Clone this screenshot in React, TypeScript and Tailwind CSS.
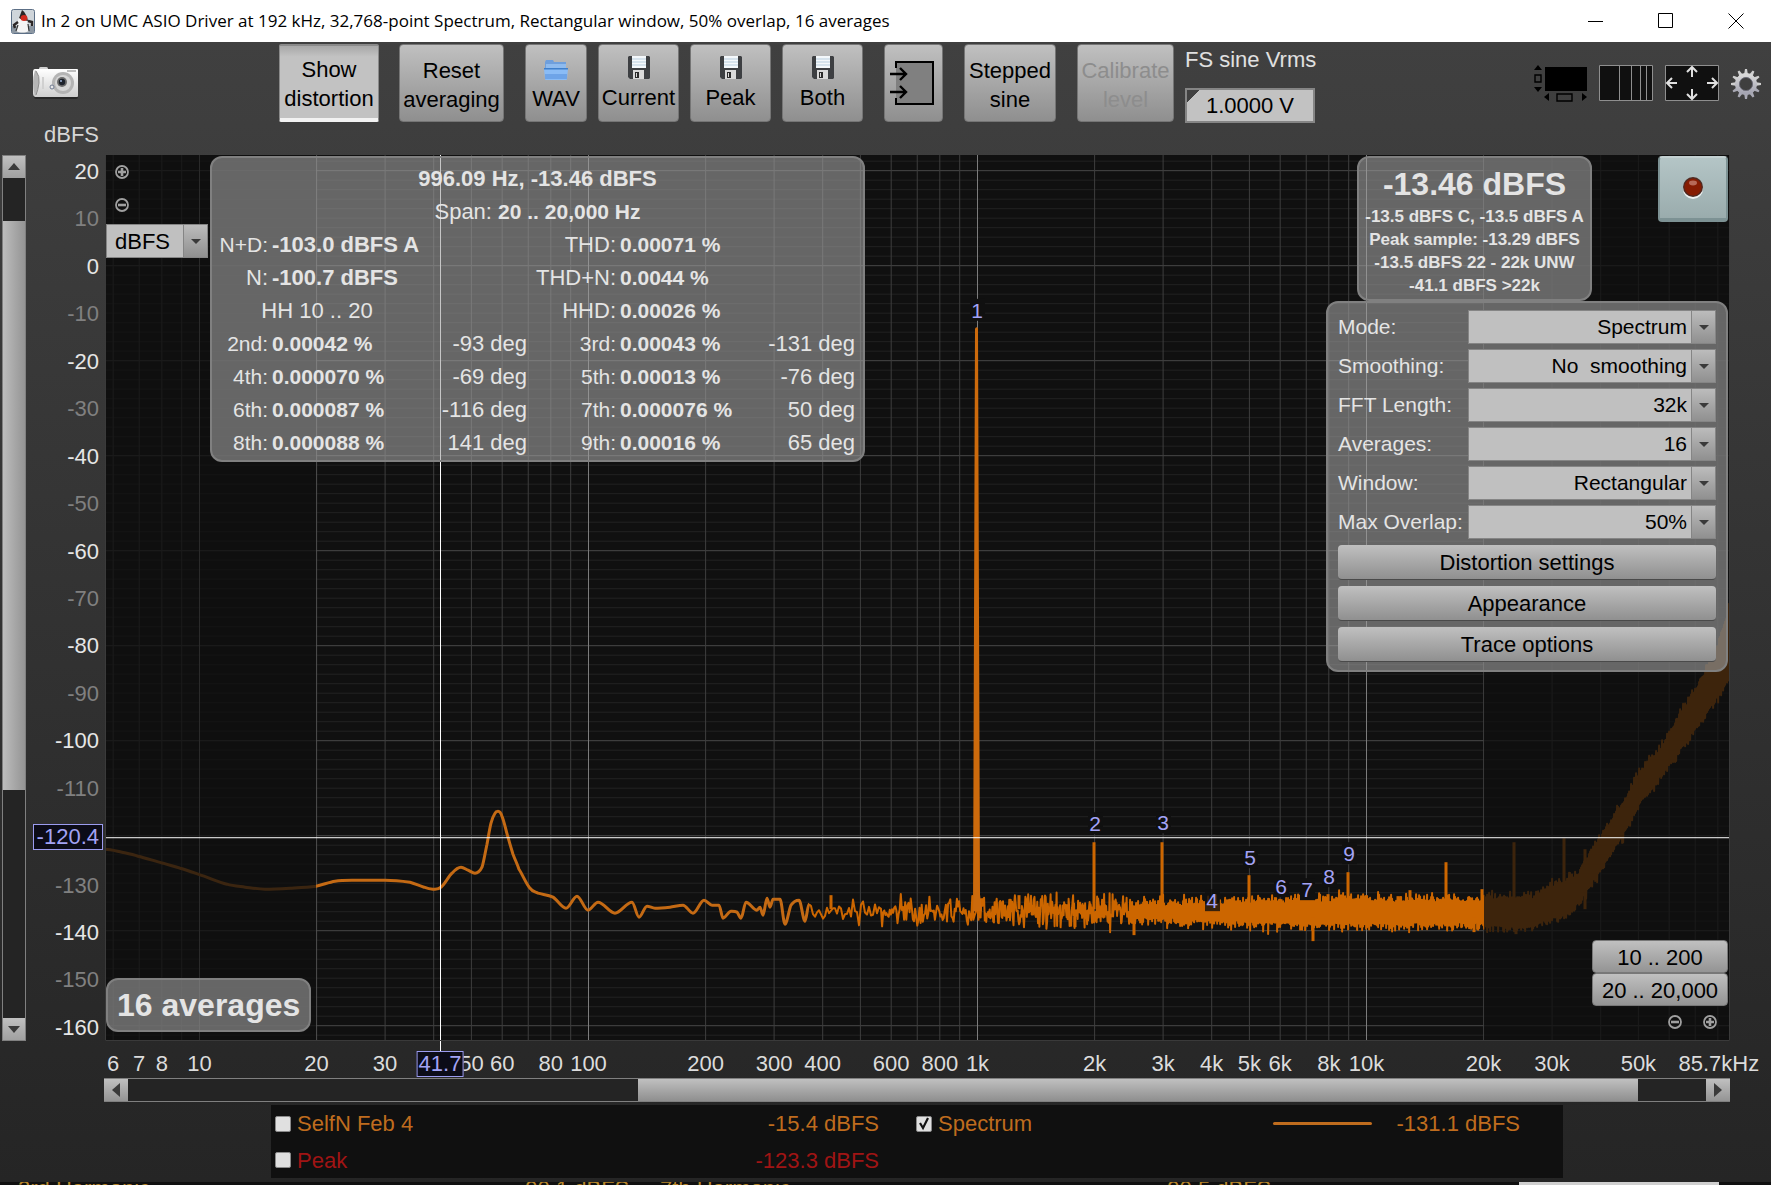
import { ReactNode, useState } from "react";

// plot area in chart units
const LEFT = 105;
const TOP = 155;
const WIDTH = 1625;
const HEIGHT = 887;

const freqToX = (f: number) => 588.5 + 389 * Math.log10(f / 100);
const dbToY = (db: number) => 265.8 - db * 4.7556;
const toPercent = (x: number) => `${((x - LEFT) / WIDTH) * 100}%`;

const freqTicks: [number, string][] = [
  [6, "6"],
  [7, "7"],
  [8, "8"],
  [10, "10"],
  [20, "20"],
  [30, "30"],
  [50, "50"],
  [60, "60"],
  [80, "80"],
  [100, "100"],
  [200, "200"],
  [300, "300"],
  [400, "400"],
  [600, "600"],
  [800, "800"],
  [1000, "1k"],
  [2000, "2k"],
  [3000, "3k"],
  [4000, "4k"],
  [5000, "5k"],
  [6000, "6k"],
  [8000, "8k"],
  [10000, "10k"],
  [20000, "20k"],
  [30000, "30k"],
  [50000, "50k"],
  [80500, "85.7kHz"],
];

const dbTicks = Array.from({ length: 19 }, (_, i) => 20 - i * 10);

const gridFreqs: number[] = [];
for (let decade = 1; decade <= 10000; decade *= 10) {
  for (let n = 1; n < 10; n++) {
    const f = n * decade;
    if (f >= 6 && f <= 85700) gridFreqs.push(f);
  }
}
const gridDbs = Array.from({ length: 93 }, (_, i) => 22 - i * 2);

const lowTrace = [
  [105, 850], [122, 853], [138, 857], [163, 864], [180, 869], [204, 877],
  [227, 885], [245, 888], [265, 890], [290, 889], [316, 887], [335, 882],
  [352, 881], [385, 881], [410, 883], [424, 888], [433, 890], [441, 888],
  [452, 874], [461, 868], [468, 871], [475, 874], [482, 868], [487, 845],
  [491, 824], [495, 814], [498, 812], [502, 817], [508, 838], [513, 855],
  [519, 870], [530, 889], [538, 894], [553, 898], [566, 909], [577, 897],
  [588, 911], [598, 903], [615, 914], [632, 903], [639, 918], [647, 907],
  [655, 909], [670, 908], [683, 906], [693, 914], [704, 901], [712, 906],
  [719, 906], [723, 919], [731, 912], [737, 913], [741, 919], [746, 903],
  [757, 911], [760, 908], [763, 916], [767, 899], [770, 908], [773, 900],
  [780, 900], [785, 925], [791, 906], [799, 901], [805, 922], [809, 905],
];

// x, upper edge, lower edge of the noise band above 20 kHz
const ultrasonicBand = [
  [1484, 899, 927],
  [1535, 899, 927],
  [1550, 889, 920],
  [1573, 880, 911],
  [1585, 866, 895],
  [1598, 841, 873],
  [1622, 806, 838],
  [1640, 774, 804],
  [1660, 750, 778],
  [1673, 727, 760],
  [1700, 683, 723],
  [1720, 642, 694],
  [1731, 598, 673],
];

const spikes = [
  [831, 896], [1094, 843], [1162, 843], [1019, 896], [1249, 876],
  [1348, 873], [1410, 891], [1446, 863], [1482, 890], [1328, 895],
  [1366, 896], [1398, 897], [1281, 900], [1514, 843], [1564, 839],
  [1585, 850],
];
const dips = [
  [1134, 936], [1313, 942], [1516, 935], [1474, 933], [1075, 928],
];

const harmonics = [
  [977, 311], [1095, 825], [1163, 824], [1212, 902], [1250, 859],
  [1281, 888], [1307, 891], [1329, 878], [1349, 855],
];

const smoothPath = (pts: number[][]) => {
  let d = `M${pts[0][0]} ${pts[0][1]}`;
  for (let i = 0; i < pts.length - 1; i++) {
    const p0 = pts[Math.max(i - 1, 0)];
    const p1 = pts[i];
    const p2 = pts[i + 1];
    const p3 = pts[Math.min(i + 2, pts.length - 1)];
    // flat tangents at turning points keep the curve from overshooting
    const t1 = (p1[1] - p0[1]) * (p2[1] - p1[1]) <= 0 ? 0 : (p2[1] - p0[1]) / 6;
    const t2 = (p2[1] - p1[1]) * (p3[1] - p2[1]) <= 0 ? 0 : (p3[1] - p1[1]) / 6;
    const dx = (p2[0] - p1[0]) / 3;
    d += `C${p1[0] + dx} ${p1[1] + t1} ${p2[0] - dx} ${p2[1] - t2} ${p2[0]} ${p2[1]}`;
  }
  return d;
};

const noisePath = () => {
  let seed = 7;
  const rand = () => {
    seed = (seed * 16807) % 2147483647;
    return seed / 2147483647;
  };
  const gauss = () => rand() + rand() + rand() + rand() - 2;
  let d = "M809 905";
  let x = 811;
  while (x < 1130) {
    const spread = x < 900 ? 9 : x < 977 ? 10 : 13;
    d += `L${x.toFixed(1)} ${(912 + gauss() * spread).toFixed(1)}`;
    x += x < 880 ? 2 : x < 977 ? 1.1 : x < 1050 ? 0.7 : 0.5;
  }
  for (; x < 1484; x++) {
    const grow = Math.min((x - 1130) / 180, 1);
    const top = 908 - grow * 4 - Math.abs(gauss()) * 8;
    const bottom = 917 + grow * 6 + Math.abs(gauss()) * 8;
    d += `L${x} ${top.toFixed(1)}L${x} ${bottom.toFixed(1)}`;
  }
  for (; x <= 1731; x++) {
    const i = ultrasonicBand.findIndex((b) => b[0] >= x);
    const b = ultrasonicBand[i];
    const a = ultrasonicBand[Math.max(i - 1, 0)];
    const t = b[0] === a[0] ? 0 : (x - a[0]) / (b[0] - a[0]);
    const top = a[1] + (b[1] - a[1]) * t + 2 - Math.abs(gauss()) * 7;
    const bottom = a[2] + (b[2] - a[2]) * t - 2 + Math.abs(gauss()) * 7;
    d += `L${x} ${top.toFixed(1)}L${x} ${bottom.toFixed(1)}`;
  }
  return d;
};

const LOW_PATH = smoothPath(lowTrace);
const NOISE_PATH = noisePath();

const SpectrumPlot = () => (
  <svg
    viewBox={`${LEFT} ${TOP} ${WIDTH} ${HEIGHT}`}
    preserveAspectRatio="none"
    className="absolute inset-0 h-full w-full bg-[#101010]"
  >
    <g shapeRendering="crispEdges">
      {gridDbs.map((db) => (
        <line
          key={db}
          x1={LEFT}
          x2={LEFT + WIDTH}
          y1={dbToY(db)}
          y2={dbToY(db)}
          stroke={db % 20 === 0 ? "#484848" : "#222222"}
        />
      ))}
      {gridFreqs.map((f) => (
        <line
          key={f}
          x1={freqToX(f)}
          x2={freqToX(f)}
          y1={TOP}
          y2={TOP + HEIGHT}
          stroke={
            [10, 100, 1000, 10000].includes(f)
              ? "#7c7c7c"
              : f === 20
                ? "#505050"
                : "#3e3e3e"
          }
        />
      ))}
    </g>
    <g fill="none" stroke="#cc6600" strokeLinejoin="round">
      <path d={LOW_PATH} stroke="#c46a14" strokeWidth="3" />
      <path d={NOISE_PATH} strokeWidth="2" />
      {spikes.map(([x, y]) => (
        <path key={x} d={`M${x} 910V${y}`} strokeWidth="3" />
      ))}
      {dips.map(([x, y]) => (
        <path key={x} d={`M${x} 918V${y}`} strokeWidth="3" />
      ))}
    </g>
    <path d="M973 912L975 329Q977 326 978 329L980 895L982 912z" fill="#cc6a0c" />
    {/* outside the 20 Hz - 20 kHz span */}
    <rect x={LEFT} y={TOP} width={211} height={HEIGHT} fill="#101010" opacity="0.76" />
    <rect x={1484} y={TOP} width={246} height={HEIGHT} fill="#101010" opacity="0.76" />
    {harmonics.map(([x, y], i) => (
      <g key={x}>
        <rect
          x={x - 7}
          y={y - 12}
          width={15}
          height={22}
          fill="#101010"
          fillOpacity={i === 3 ? 0.8 : 1}
        />
        <text
          x={x}
          y={y + 7}
          textAnchor="middle"
          fontSize="21"
          fill="#a3a3f5"
        >
          {i + 1}
        </text>
      </g>
    ))}
    <g shapeRendering="crispEdges" stroke="#ffffff">
      <line x1={440.5} x2={440.5} y1={TOP} y2={TOP + HEIGHT} />
      <line x1={LEFT} x2={LEFT + WIDTH} y1={838.5} y2={838.5} />
    </g>
    <path
      d={`M${LEFT + 0.5} ${TOP}V${TOP + HEIGHT - 0.5}H${LEFT + WIDTH - 0.5}V${TOP}`}
      fill="none"
      stroke="#3a3a3a"
    />
  </svg>
);

const DukeIcon = () => (
  <svg width="24" height="25" viewBox="0 0 24 25">
    <rect x="0.5" y="0.5" width="23" height="24" rx="2" fill="#cfd5da" stroke="#5c6f86" />
    <path d="M1 17h22v7H1z" fill="#8d98a3" />
    <path d="M5 22C6 13 8 8 11 2c3 3 6 11 7 20-4 2-9 2-13 0z" fill="#f5f5f5" />
    <path d="M8 9l3-8c3 2 5 6 6 11-3-1-6-1-9-3z" fill="#2b2626" />
    <path d="M7 13l-4 3 1 3M17 12l4 1v4" fill="none" stroke="#2b2626" strokeWidth="2.4" />
    <path d="M5 22l2-6M18 22l-1-7" stroke="#333" strokeWidth="1.2" />
    <ellipse cx="13" cy="9" rx="3.4" ry="3" fill="#d3291d" />
  </svg>
);

const CameraIcon = () => (
  <svg width="46" height="33" viewBox="0 0 46 33">
    <defs>
      <linearGradient id="cam" x1="0" y1="0" x2="0" y2="1">
        <stop offset="0" stopColor="#ffffff" />
        <stop offset="1" stopColor="#cfcfcf" />
      </linearGradient>
    </defs>
    <rect x="1" y="28" width="44" height="4" rx="2" fill="#1f1f1f" opacity="0.7" />
    <rect x="6" y="0" width="9" height="4" rx="1.5" fill="#d2d2d2" />
    <path d="M2 2h42q1 0 1 1v26q0 1-1 1H2Q0 29 0 27V5q0-3 2-3z" fill="url(#cam)" />
    <path d="M2 3q5 5 4 13T2 29Q0 22 0 16T2 3z" fill="#b5b5b5" />
    <path d="M3 4q4 5 3 12T3 28" fill="none" stroke="#8e8e8e" />
    <path d="M10 10v12" stroke="#d0d0d0" strokeWidth="2" />
    <path d="M34 4h9" stroke="#bdbdbd" strokeWidth="2" />
    <circle cx="30" cy="16" r="11" fill="#b4b4b4" />
    <circle cx="30" cy="16" r="8" fill="#d6d6d6" />
    <circle cx="29" cy="15" r="5" fill="#6c6c6c" />
    <circle cx="29" cy="15" r="3.2" fill="#1d222b" />
    <circle cx="28" cy="14" r="1" fill="#9fb4d8" />
    <circle cx="19" cy="20" r="2" fill="#e8e8e8" stroke="#6f7a90" />
  </svg>
);

const FolderIcon = () => (
  <svg width="24" height="20" viewBox="0 0 24 20" className="mt-1">
    <path d="M1 2l1-2h7l1 2h12v8H1z" fill="#6f9fdc" />
    <path d="M2 4h20v5H2z" fill="#8fbbee" />
    <path d="M0 9h24l-1 10q0 1-1 1H2q-1 0-1-1z" fill="#8abcf6" />
    <path d="M0 8h24v1.500H0z" fill="#3f7fcb" />
    <path d="M1 14h22v5H1z" fill="#6ea4e8" />
  </svg>
);

const DiskIcon = () => (
  <svg width="22" height="23" viewBox="0 0 22 23">
    <path d="M1 0h20l1 1v21l-1 1H2l-2-2V1z" fill="#3d3f42" />
    <path d="M4 0h14v12H4z" fill="#f4f8fb" />
    <path d="M4 3h14M4 6h14M4 9h14" stroke="#b9cede" />
    <path d="M5 14h11v9H5z" fill="#d9d9d9" />
    <path d="M7 16h4v6H7z" fill="#2b2b2b" />
    <path d="M8 17h1v4H8z" fill="#d9d9d9" />
  </svg>
);

const InputsIcon = () => (
  <svg width="48" height="46" viewBox="0 0 48 46">
    <path d="M6 2h36v42H6z" fill="#808080" />
    <path d="M6 8V2h37v42H6v-6" fill="none" stroke="#000" strokeWidth="2" />
    <path
      d="M0 14h16M10 8l6 6-6 6M0 32h16M10 26l6 6-6 6"
      fill="none"
      stroke="#000"
      strokeWidth="2.4"
    />
  </svg>
);

const ScrollbarsIcon = () => (
  <svg width="54" height="38" viewBox="0 0 54 38">
    <rect x="12" y="2" width="42" height="24" fill="#000" />
    <path d="M1 5l4-5 4 5zM1 22h8l-4 5zM16 28v8l-5-4zM49 28v8l5-4z" fill="#000" />
    <path d="M2 10h6v7H2zM24 29h15v7H24z" fill="none" stroke="#000" strokeWidth="1.4" />
  </svg>
);

const LogGridIcon = () => (
  <svg width="54" height="36" viewBox="0 0 54 36">
    <path
      d="M.5.5h53v35H.5zM20.5 0v36M32.5 0v36M41.5 0v36M47.5 0v36"
      fill="#101010"
      stroke="#8f8f8f"
    />
  </svg>
);

const FitIcon = () => (
  <svg width="54" height="36" viewBox="0 0 54 36">
    <path d="M.5.5h53v35H.5z" fill="#101010" stroke="#8f8f8f" />
    <path
      d="M27 12V3M22 7l5-5 5 5M27 24v9M22 29l5 5 5-5M12 18H3M7 13l-5 5 5 5M42 18h9M47 13l5 5-5 5"
      fill="none"
      stroke="#e0e0e0"
      strokeWidth="2"
    />
  </svg>
);

const GearIcon = () => (
  <svg width="30" height="30" viewBox="-15 -15 30 30">
    <defs>
      <linearGradient id="gear" x1="0" y1="0" x2="0" y2="1">
        <stop offset="0" stopColor="#d8d8d8" />
        <stop offset="1" stopColor="#a5a5b2" />
      </linearGradient>
    </defs>
    {Array.from({ length: 12 }, (_, i) => (
      <path
        key={i}
        d="M-2 -9L-1 -15H1L2 -9z"
        fill={i > 3 && i < 9 ? "#a9a9b4" : "#cfcfcf"}
        transform={`rotate(${i * 30})`}
      />
    ))}
    <circle r="8.8" fill="none" stroke="url(#gear)" strokeWidth="4.4" />
    <circle r="6.6" fill="none" stroke="#6d6d78" strokeWidth="1" />
  </svg>
);

const RecordIcon = () => (
  <svg width="22" height="24" viewBox="0 0 22 24">
    <circle cx="11" cy="13" r="10" fill="#eef3f3" />
    <circle cx="11" cy="11" r="10" fill="#4f2a22" />
    <circle cx="11" cy="11" r="8.6" fill="#861c02" />
    <ellipse cx="11" cy="7" rx="4" ry="2.4" fill="#b76a58" />
  </svg>
);

const ZoomButton = ({ type }: { type: "in" | "out" }) => (
  <button aria-label={`Zoom ${type}`} className="block h-4 w-4">
    <svg width="16" height="16" viewBox="0 0 16 16">
      <circle cx="8" cy="8" r="6" fill="none" stroke="#a0a0a0" strokeWidth="1.8" />
      <path
        d={type === "in" ? "M4 8h8M8 4v8" : "M4 8h8"}
        stroke="#a0a0a0"
        strokeWidth="2.6"
      />
    </svg>
  </button>
);

const Triangle = ({ d }: { d: string }) => (
  <svg width="14" height="14" viewBox="0 0 14 14">
    <path d={d} fill="#3a3a3a" />
  </svg>
);

const ToolButton = ({
  className,
  children,
  disabled,
}: {
  className: string;
  children: ReactNode;
  disabled?: boolean;
}) => (
  <button
    disabled={disabled}
    className={`flex h-[78px] shrink-0 flex-col items-center justify-center rounded border border-[#757575] bg-linear-to-b from-[#c0c0c0] to-[#8f8f8f] leading-[29px] disabled:text-[#8d8d8d] ${className}`}
  >
    {children}
  </button>
);

const DropDown = ({
  id,
  value,
  label,
  className = "",
  selectClassName = "pr-7 [text-align-last:right]",
}: {
  id: string;
  value: string;
  label?: string;
  className?: string;
  selectClassName?: string;
}) => (
  <div className={`relative h-[34px] border border-[#858585] ${className}`}>
    <select
      id={id}
      aria-label={label}
      className={`h-full w-full appearance-none bg-[#c0c0c0] pl-2 text-black ${selectClassName}`}
    >
      <option>{value}</option>
    </select>
    <span className="pointer-events-none absolute inset-y-0 right-0 flex w-6 items-center justify-center border-l border-[#858585] bg-linear-to-b from-[#bcbcbc] to-[#909090]">
      <Triangle d="M2 5h10l-5 5z" />
    </span>
  </div>
);

const panelStyle =
  "absolute rounded-xl border-2 border-[#808080] bg-[#a0a0a0]/60 text-[#e4e4e4]";

const valueStyle = "pl-1 text-[21px] font-bold";

const harmonicRows = [
  ["2nd:", "0.00042 %", "-93 deg", "3rd:", "0.00043 %", "-131 deg"],
  ["4th:", "0.000070 %", "-69 deg", "5th:", "0.00013 %", "-76 deg"],
  ["6th:", "0.000087 %", "-116 deg", "7th:", "0.000076 %", "50 deg"],
  ["8th:", "0.000088 %", "141 deg", "9th:", "0.00016 %", "65 deg"],
];

const DistortionPanel = () => (
  <div className={`${panelStyle} top-px left-[105px] w-[655px] pt-1 pb-px`}>
    <p className="text-center leading-[33px] font-bold">996.09 Hz, -13.46 dBFS</p>
    <p className="text-center leading-[33px]">
      Span: <b className="text-[21px]">20 .. 20,000 Hz</b>
    </p>
    <table className="w-full table-fixed leading-[33px] whitespace-nowrap">
      <colgroup>
        <col className="w-[56px]" />
        <col className="w-[158px]" />
        <col className="w-[101px]" />
        <col className="w-[89px]" />
        <col className="w-[137px]" />
        <col />
      </colgroup>
      <tbody>
        <tr>
          <td className="text-right text-[21px]">N+D:</td>
          <td colSpan={2} className="pl-1 font-bold">-103.0 dBFS A</td>
          <td className="text-right">THD:</td>
          <td colSpan={2} className={valueStyle}>0.00071 %</td>
        </tr>
        <tr>
          <td className="text-right">N:</td>
          <td colSpan={2} className="pl-1 font-bold">-100.7 dBFS</td>
          <td className="flex justify-end">THD+N:</td>
          <td colSpan={2} className={valueStyle}>0.0044 %</td>
        </tr>
        <tr>
          <td colSpan={2} className="pr-1 text-center">HH 10 .. 20</td>
          <td />
          <td className="text-right">HHD:</td>
          <td colSpan={2} className={valueStyle}>0.00026 %</td>
        </tr>
        {harmonicRows.map((row) => (
          <tr key={row[0]}>
            <td className="text-right text-[21px]">{row[0]}</td>
            <td className={valueStyle}>{row[1]}</td>
            <td className="text-right">{row[2]}</td>
            <td className="text-right text-[21px]">{row[3]}</td>
            <td className={valueStyle}>{row[4]}</td>
            <td className="pr-2 text-right">{row[5]}</td>
          </tr>
        ))}
      </tbody>
    </table>
  </div>
);

const LevelPanel = () => (
  <div className={`${panelStyle} top-px right-[138px] w-[235px] pt-[7px] pb-[2px] text-center font-bold whitespace-nowrap`}>
    <p className="text-[32px] leading-[38px]">-13.46 dBFS</p>
    <div className="mx-[-4px] pt-0.5 text-[17px] leading-[23px]">
      <p>-13.5 dBFS C, -13.5 dBFS A</p>
      <p>Peak sample: -13.29 dBFS</p>
      <p>-13.5 dBFS 22 - 22k UNW</p>
      <p>-41.1 dBFS &gt;22k</p>
    </div>
  </div>
);

const settings = [
  ["mode", "Mode:", "Spectrum"],
  ["smoothing", "Smoothing:", "No\u00a0 smoothing"],
  ["fft", "FFT Length:", "32k"],
  ["averages", "Averages:", "16"],
  ["window", "Window:", "Rectangular"],
  ["overlap", "Max Overlap:", "50%"],
];

const SettingsPanel = () => (
  <div className={`${panelStyle} top-[146px] right-[2px] flex w-[402px] flex-col gap-1.5 px-2.5 pt-[7px] pb-2`}>
    <div className="flex flex-col gap-[5px] text-[21px]">
      {settings.map(([id, label, value]) => (
        <div key={id} className="flex items-center">
          <label htmlFor={id} className="w-[130px] whitespace-nowrap">
            {label}
          </label>
          <DropDown id={id} value={value} className="flex-1" />
        </div>
      ))}
    </div>
    {["Distortion settings", "Appearance", "Trace options"].map((text) => (
      <button
        key={text}
        className="h-[35px] rounded border-b border-[#4a4a4a] bg-linear-to-b from-[#c0c0c0] to-[#909090] text-black"
      >
        {text}
      </button>
    ))}
  </div>
);

const Check = ({ id, checked }: { id: string; checked?: boolean }) => {
  const [on, setOn] = useState(!!checked);
  return (
    <span className="relative flex h-4 w-4 shrink-0">
      <input
        id={id}
        type="checkbox"
        checked={on}
        onChange={() => setOn(!on)}
        className="h-4 w-4 appearance-none rounded-xs border border-[#8a8a8a] bg-[#e0e0e0]"
      />
      {on && (
        <svg
          viewBox="0 0 16 16"
          className="pointer-events-none absolute inset-0 h-4 w-4"
        >
          <path d="M4 7l3 5 5-10" fill="none" stroke="#111" strokeWidth="2.2" />
        </svg>
      )}
    </span>
  );
};

const scrollButton =
  "flex w-6 shrink-0 items-center justify-center bg-linear-to-b from-[#c0c0c0] to-[#949494]";

const App = () => {
  const [vrms, setVrms] = useState("1.0000 V");

  return (
    <div className="flex min-h-screen flex-col overflow-hidden bg-[#262626] font-['Liberation_Sans',Arial,sans-serif] text-[22px] text-black">
      <header className="flex h-[42px] items-center bg-white pl-[11px]">
        <DukeIcon />
        <h1 className="ml-1.5 flex-1 font-['Open_Sans','Segoe_UI',sans-serif] text-[17px]">
          In 2 on UMC ASIO Driver at 192 kHz, 32,768-point Spectrum, Rectangular
          window, 50% overlap, 16 averages
        </h1>
        <div className="flex">
          <button aria-label="Minimize" className="flex w-[70px] justify-center">
            <svg width="16" height="16" viewBox="0 0 16 16">
              <path d="M0 8.5h15" stroke="#000" />
            </svg>
          </button>
          <button aria-label="Maximize" className="flex w-[70px] justify-center">
            <svg width="16" height="16" viewBox="0 0 16 16">
              <path d="M.5.5h14v14H.5z" fill="none" stroke="#000" />
            </svg>
          </button>
          <button aria-label="Close" className="flex w-[70px] justify-center">
            <svg width="16" height="16" viewBox="0 0 16 16">
              <path d="M.5.5l15 15M15.5.5l-15 15" stroke="#000" />
            </svg>
          </button>
        </div>
      </header>

      <main className="flex flex-1 flex-col bg-linear-to-b from-[#404040] to-[#252525]">
        <div className="flex items-start pt-[2px]">
          <button aria-label="Capture" className="mt-[23px] ml-[33px] w-[246px] shrink-0">
            <CameraIcon />
          </button>
          <button className="h-[78px] w-[100px] shrink-0 rounded-xs border border-t-2 border-b-4 border-[#8a8a8a] border-b-[#f2f2f2] bg-linear-to-b from-[#a8a8a8] via-[#c2c2c2] via-15% to-[#c2c2c2] pt-1 leading-[29px]">
            Show distortion
          </button>
          <ToolButton className="ml-5 w-[105px] pt-1">
            <span>Reset</span>
            <span>averaging</span>
          </ToolButton>
          <ToolButton className="ml-[21px] w-[62px] pt-0.5">
            <FolderIcon />
            <span className="mt-1">WAV</span>
          </ToolButton>
          {["Current", "Peak", "Both"].map((name) => (
            <ToolButton key={name} className="ml-[11px] w-[81px] pt-0.5">
              <DiskIcon />
              <span className="mt-1">{name}</span>
            </ToolButton>
          ))}
          <ToolButton className="ml-[21px] w-[59px]">
            <InputsIcon />
          </ToolButton>
          <ToolButton className="ml-[21px] w-[92px] pt-1">
            <span>Stepped</span>
            <span>sine</span>
          </ToolButton>
          <ToolButton className="ml-[21px] w-[97px] pt-1" disabled>
            <span>Calibrate</span>
            <span>level</span>
          </ToolButton>
          <div className="ml-[11px] flex w-[130px] flex-col">
            <label htmlFor="vrms" className="h-11 leading-[31px] whitespace-nowrap text-[#e0e0e0]">
              FS sine Vrms
            </label>
            <input
              id="vrms"
              value={vrms}
              onChange={(e) => setVrms(e.target.value)}
              className="h-[35px] w-full border-2 border-[#858585] bg-linear-135 from-[#404040] from-8% to-[#c2c2c2] to-8% text-center"
            />
          </div>
          <div className="mt-[21px] mr-[10px] ml-auto flex items-start gap-3">
            <button aria-label="Scrollbars">
              <ScrollbarsIcon />
            </button>
            <button aria-label="Log axis">
              <LogGridIcon />
            </button>
            <button aria-label="Fit to data">
              <FitIcon />
            </button>
            <button aria-label="Settings" className="mt-1">
              <GearIcon />
            </button>
          </div>
        </div>
        <div className="h-8 w-[99px] pt-px text-right leading-[22px] text-[#d6d6d6]">
          dBFS
        </div>

        <div className="flex flex-1 pr-[41px] pl-0.5">
          <div className="flex w-6 flex-col border border-[#808080] bg-[#242424]">
            <button aria-label="Scroll up" className="flex h-[22px] shrink-0 items-center justify-center bg-linear-to-b from-[#c0c0c0] to-[#a0a0a0]">
              <Triangle d="M1 10h12L7 3z" />
            </button>
            <div className="mt-[43px] flex-[570] bg-linear-to-r from-[#bdbdbd] to-[#949494]" />
            <div className="flex-[229]" />
            <button aria-label="Scroll down" className="flex h-[22px] shrink-0 items-center justify-center bg-linear-to-b from-[#c0c0c0] to-[#a0a0a0]">
              <Triangle d="M1 4h12l-6 7z" />
            </button>
          </div>
          <div className="flex w-[79px] flex-col items-end justify-between pt-[5px] pr-1.5 pb-px leading-6">
            {dbTicks.map((db) =>
              db === -120 ? (
                <span
                  key={db}
                  className="mr-[-4px] border border-[#9c9cf0] bg-[#0c0c18] px-[3px] text-[#a3a3f5]"
                >
                  -120.4
                </span>
              ) : (
                <span
                  key={db}
                  className={db % 20 === 0 ? "text-[#e6e6e6]" : "text-[#808080]"}
                >
                  {db}
                </span>
              ),
            )}
          </div>

          <div className="relative min-h-[700px] flex-1">
            <SpectrumPlot />
            <div className="absolute top-[9px] left-[9px] flex flex-col gap-[17px]">
              <ZoomButton type="in" />
              <ZoomButton type="out" />
            </div>
            <DropDown
              id="unit"
              label="Y axis unit"
              value="dBFS"
              className="absolute! top-[69px] left-px w-[102px]"
              selectClassName="pr-6"
            />
            <DistortionPanel />
            <LevelPanel />
            <button
              aria-label="Record"
              className="absolute top-px right-[2px] flex h-[66px] w-[70px] items-center justify-center rounded border-2 border-[#7d9294] border-t-[#c3d0d1] border-b-4 bg-linear-to-b from-[#b4c5c6] to-[#9aacad]"
            >
              <RecordIcon />
            </button>
            <SettingsPanel />
            <div className={`${panelStyle} bottom-[9px] left-px px-[9px] text-[32px] leading-[50px] font-bold`}>
              16 averages
            </div>
            <div className="absolute right-[2px] bottom-[11px] flex w-[136px] flex-col items-stretch">
              <button className="h-[33px] rounded border border-[#787878] bg-linear-to-b from-[#c0c0c0] to-[#949494]">
                10 .. 200
              </button>
              <button className="h-[33px] rounded border border-[#787878] bg-linear-to-b from-[#c0c0c0] to-[#949494]">
                20 .. 20,000
              </button>
              <div className="mt-2 mr-[10px] flex justify-end gap-[19px]">
                <ZoomButton type="out" />
                <ZoomButton type="in" />
              </div>
            </div>
          </div>
        </div>

        <div className="relative mr-[41px] ml-[105px] h-[37px] leading-6 text-[#dcdcdc]">
          <div
            className="absolute top-0 h-[10px] w-px bg-white"
            style={{ left: toPercent(440) }}
          />
          {freqTicks.map(([f, text]) => (
            <span
              key={f}
              className="absolute top-[11px] -translate-x-1/2 whitespace-nowrap"
              style={{ left: toPercent(freqToX(f)) }}
            >
              {text}
            </span>
          ))}
          <span
            className="absolute top-[10px] -translate-x-1/2 border border-[#9c9cf0] bg-[#0c0c18] px-px text-[#a3a3f5]"
            style={{ left: toPercent(440) }}
          >
            41.7
          </span>
        </div>

        <div className="mr-[41px] ml-[104px] flex h-6 border-y border-[#808080] bg-[#242424]">
          <button aria-label="Scroll left" className={scrollButton}>
            <Triangle d="M11 0v14L3 7z" />
          </button>
          <div className="flex-[510]" />
          <div className="flex-[999] bg-linear-to-b from-[#c0c0c0] to-[#8f8f8f]" />
          <div className="flex-[68]" />
          <button aria-label="Scroll right" className={scrollButton}>
            <Triangle d="M3 0v14l8-7z" />
          </button>
        </div>

        <div className="mt-[3px] mr-[208px] mb-1 ml-[271px] grid grid-cols-[604px_1fr] gap-x-[37px] bg-[#101010] pr-[43px] pl-1 text-[#bf6c1e]">
          <div className="flex h-[37px] items-center gap-1.5">
            <Check id="selfn" />
            <label htmlFor="selfn" className="flex-1">
              SelfN Feb 4
            </label>
            <span>-15.4 dBFS</span>
          </div>
          <div className="flex h-[37px] items-center gap-1.5">
            <Check id="spectrum" checked />
            <label htmlFor="spectrum" className="flex-1">
              Spectrum
            </label>
            <span className="mr-[18px] h-[3px] w-[99px] rounded bg-[#bf6c1e]" />
            <span>-131.1 dBFS</span>
          </div>
          <div className="flex h-[36px] items-center gap-1.5 text-[#a01414]">
            <Check id="peak" />
            <label htmlFor="peak" className="flex-1">
              Peak
            </label>
            <span>-123.3 dBFS</span>
          </div>
        </div>
      </main>

      {/* top edge of the trace list in the window underneath */}
      <div className="flex h-[3px] overflow-hidden bg-[#101010] pl-[18px] leading-[14px] whitespace-nowrap text-[#b8862a]">
        <span className="w-[500px]">3rd Harmonic</span>
        <span className="w-[142px]">-90.1 dBFS</span>
        <span className="w-[500px]">7th Harmonic</span>
        <span className="w-[359px]">-90.5 dBFS</span>
        <span className="w-[200px] bg-[#cfcfcf]" />
      </div>
    </div>
  );
};

export default App;
